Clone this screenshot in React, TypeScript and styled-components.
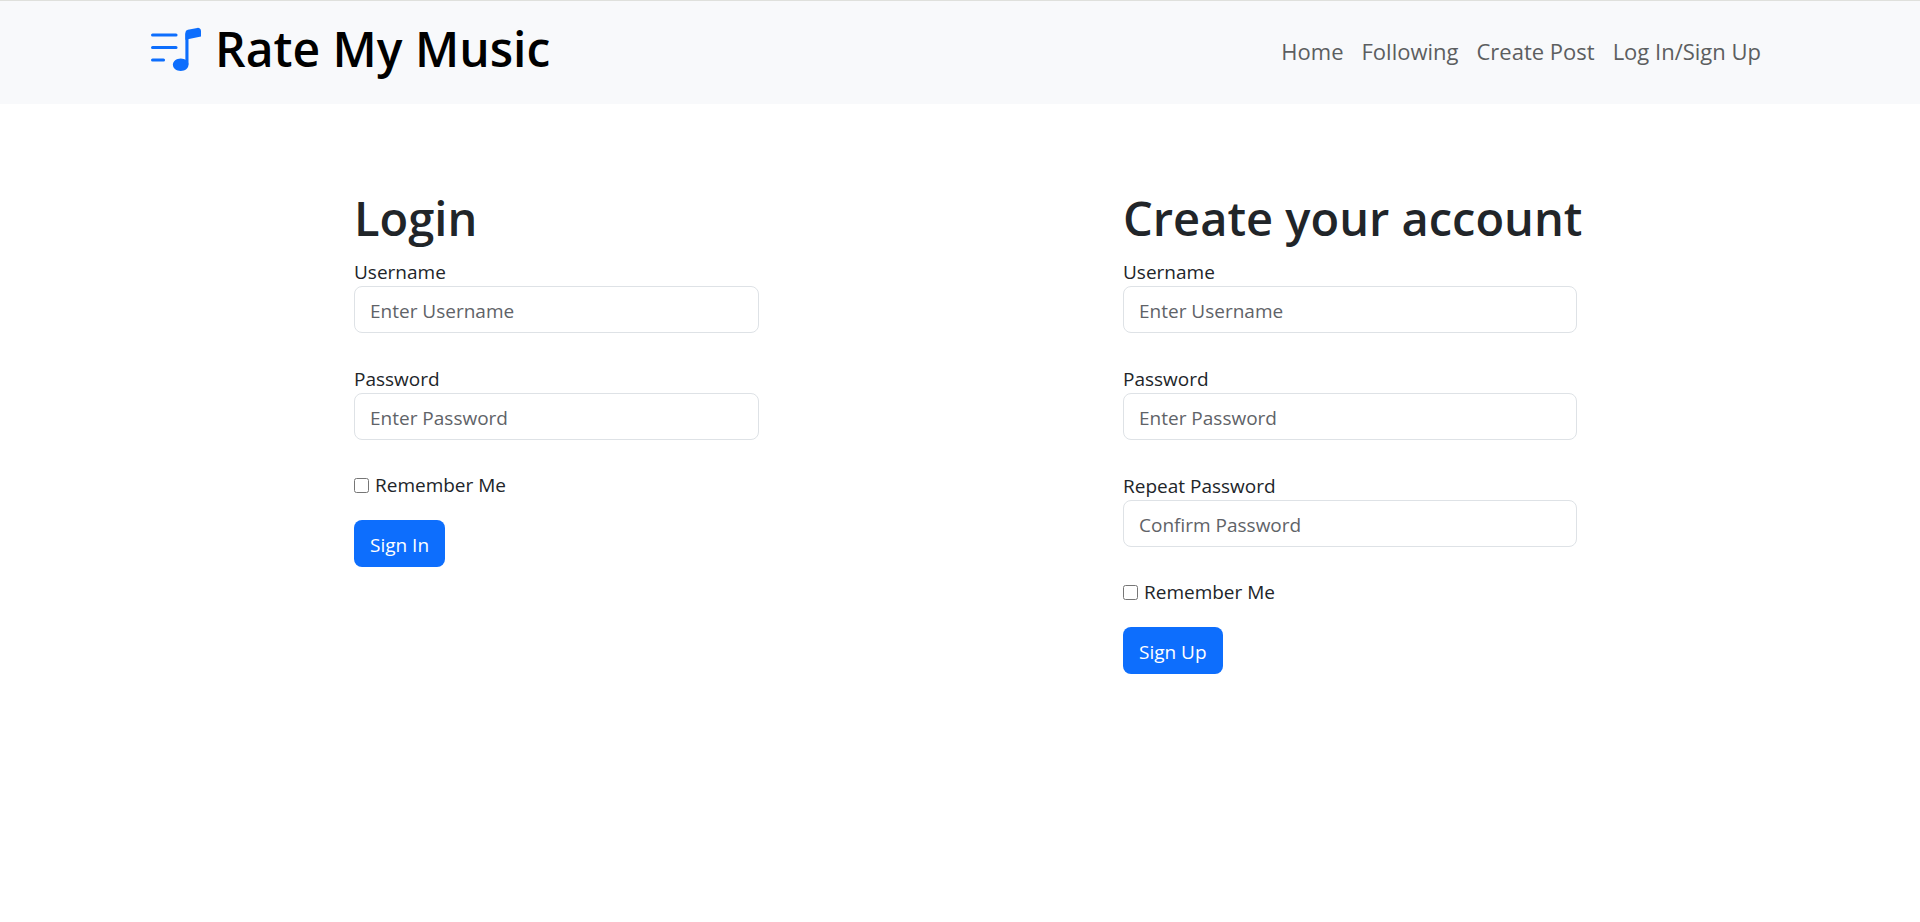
import React, { useId } from "react";
import styled, { createGlobalStyle } from "styled-components";
import { BsMusicNoteList } from "react-icons/bs";

const GlobalStyle = createGlobalStyle`
  *, *::before, *::after { box-sizing: border-box; }
  body {
    margin: 0;
    background: #fff;
    color: #212529;
    font-family: "Segoe UI", "Open Sans", "Noto Sans", sans-serif;
    font-size: 19px;
    line-height: 30px;
  }
`;

const Header = styled.header`
  background: #f8f9fb;
  border-top: 1px solid #dfe0dc;
  padding: 8px 0 15px;
`;

const HeaderInner = styled.div`
  display: flex;
  align-items: center;
  justify-content: space-between;
  max-width: 1650px;
  min-height: 80px;
  margin: 0 auto;
  padding: 0 24px 0 16px;
`;

const Brand = styled.a`
  display: flex;
  align-items: center;
  gap: 14px;
  color: #000;
  font-size: 48px;
  font-weight: 600;
  line-height: 60px;
  text-decoration: none;

  svg {
    color: #0d6efd;
  }
`;

const Nav = styled.nav`
  display: flex;
  gap: 18px;
  padding-top: 4px;
`;

const NavLink = styled.a`
  color: #5c5e60;
  font-size: 22px;
  text-decoration: none;
`;

const Main = styled.main`
  display: grid;
  grid-template-columns: 354fr 405fr 364fr 454fr 343fr;
  align-items: start;
  padding-top: 84px;
`;

const Form = styled.form<{ $column: number }>`
  grid-column: ${({ $column }) => $column};
  min-width: 0;
`;

const Title = styled.h1`
  margin: 0 0 8px;
  font-size: 47px;
  font-weight: 600;
  line-height: 60px;
  white-space: nowrap;
`;

const FieldGroup = styled.div`
  margin-bottom: 30px;
`;

const Label = styled.label`
  display: block;
  padding-top: 2px;
  line-height: 28px;
`;

const Input = styled.input`
  display: block;
  width: 100%;
  height: 47px;
  padding: 2px 15px 0;
  border: 1px solid #dee2e6;
  border-radius: 8px;
  background: #fff;
  color: #212529;
  font: inherit;

  &::placeholder {
    color: #5f6368;
    opacity: 1;
  }
`;

const CheckRow = styled.label`
  display: flex;
  align-items: center;
  gap: 6px;
  width: fit-content;
  margin-bottom: 20px;
`;

const Checkbox = styled.input`
  width: 15px;
  height: 15px;
  margin: 0;
`;

const Button = styled.button`
  height: 47px;
  padding: 2px 16px 0;
  border: 0;
  border-radius: 8px;
  background: #0d6efd;
  color: #fff;
  font: inherit;
  cursor: pointer;
`;

type FieldProps = { label: string; placeholder: string; type?: string };

function Field({ label, placeholder, type = "text" }: FieldProps) {
  const id = useId();
  return (
    <FieldGroup>
      <Label htmlFor={id}>{label}</Label>
      <Input id={id} type={type} placeholder={placeholder} />
    </FieldGroup>
  );
}

function RememberMe() {
  return (
    <CheckRow>
      <Checkbox type="checkbox" />
      Remember Me
    </CheckRow>
  );
}

const links = ["Home", "Following", "Create Post", "Log In/Sign Up"];

export default function App() {
  return (
    <>
      <GlobalStyle />
      <Header>
        <HeaderInner>
          <Brand href="#">
            <BsMusicNoteList size={50} />
            Rate My Music
          </Brand>
          <Nav>
            {links.map((link) => (
              <NavLink href="#" key={link}>
                {link}
              </NavLink>
            ))}
          </Nav>
        </HeaderInner>
      </Header>
      <Main>
        <Form $column={2}>
          <Title>Login</Title>
          <Field label="Username" placeholder="Enter Username" />
          <Field label="Password" placeholder="Enter Password" type="password" />
          <RememberMe />
          <Button type="button">Sign In</Button>
        </Form>
        <Form $column={4}>
          <Title>Create your account</Title>
          <Field label="Username" placeholder="Enter Username" />
          <Field label="Password" placeholder="Enter Password" type="password" />
          <Field label="Repeat Password" placeholder="Confirm Password" type="password" />
          <RememberMe />
          <Button type="button">Sign Up</Button>
        </Form>
      </Main>
    </>
  );
}
